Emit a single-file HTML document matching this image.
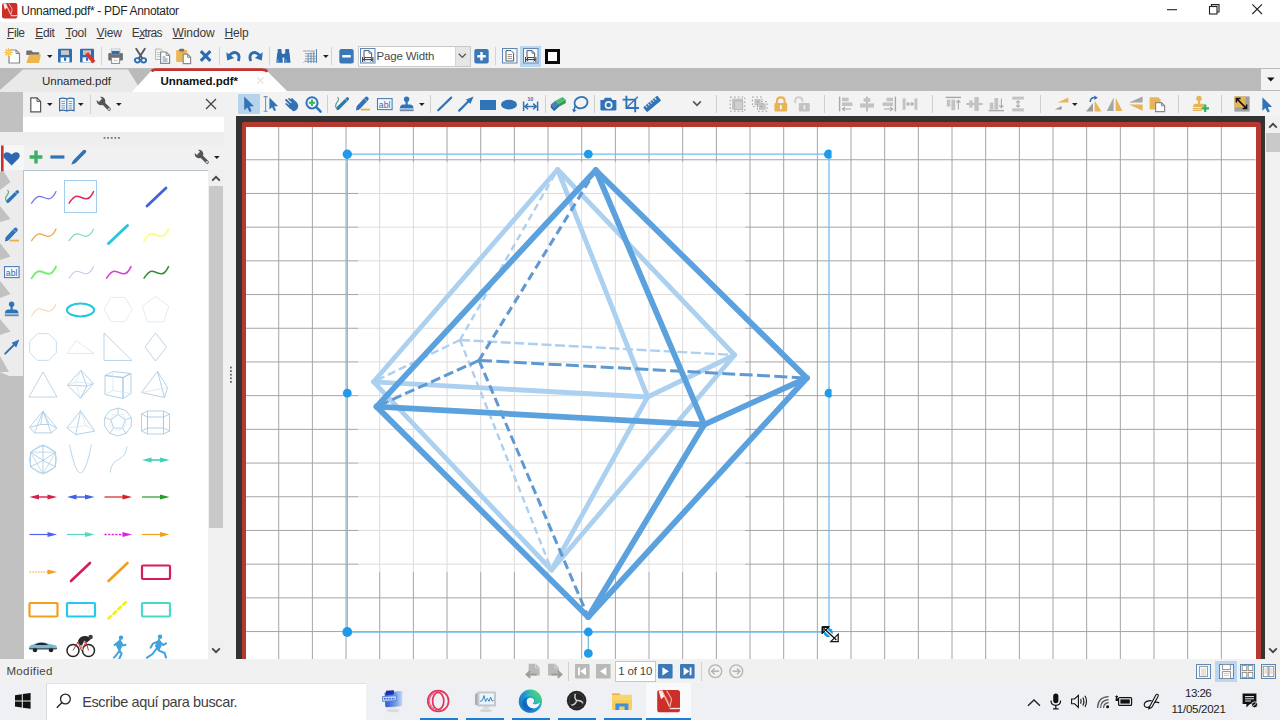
<!DOCTYPE html>
<html lang="en"><head><meta charset="utf-8"><title>Unnamed.pdf* - PDF Annotator</title>
<style>
html,body{margin:0;padding:0;}
body{width:1280px;height:720px;overflow:hidden;position:relative;background:#f3f3f3;font-family:"Liberation Sans",sans-serif;}
svg{overflow:visible;display:block;}
u{text-decoration:underline;text-underline-offset:1px;}
</style></head><body>
<div style="position:absolute;left:0px;top:0px;width:1280px;height:22px;background:#ffffff;"></div>
<svg style="position:absolute;left:2px;top:3px;" width="16" height="16" viewBox="0 0 16 16">
<rect x="0" y="0" width="15.400" height="15.400" rx="2.200" fill="#cc2e2a"/>
<polygon points="1.200,0.400 4.200,0.300 5.200,4.600 2.800,6.400" fill="#fff" opacity=".92"/>
<path d="M3.600,0.800 L8.800,11.400" stroke="#f6c4be" stroke-width="1.100" fill="none"/>
<path d="M6.800,0.400 L10.200,6.200 L9,11.600" stroke="#f2aaa3" stroke-width="1" fill="none"/>
<path d="M8.800,12.700 H15.400" stroke="#fbe3e0" stroke-width="1.100"/>
</svg>
<div style="position:absolute;left:21.3px;top:4.2px;font-size:12px;line-height:14px;color:#1f1f1f;font-weight:normal;white-space:nowrap;letter-spacing:-0.307px;">Unnamed.pdf* - PDF Annotator</div>
<svg style="position:absolute;left:1160px;top:0px;" width="120" height="22" viewBox="0 0 120 22">
<path d="M7,9.7 H17" stroke="#222" stroke-width="1.1"/>
<rect x="49.5" y="6.5" width="7.5" height="7.5" fill="none" stroke="#222" stroke-width="1.1"/>
<path d="M51.5,6.5 V4.6 H59 V12 H57" fill="none" stroke="#222" stroke-width="1.1"/>
<path d="M92.3,4.3 L102,14 M102,4.3 L92.3,14" stroke="#222" stroke-width="1.1"/>
</svg>
<div style="position:absolute;left:0px;top:22px;width:1280px;height:46px;background:#f3f3f3;"></div>
<div style="position:absolute;left:7px;top:25.6px;font-size:12px;line-height:14px;color:#3a3a3a;font-weight:normal;white-space:nowrap;letter-spacing:-0.434px;"><u>F</u>ile</div>
<div style="position:absolute;left:35.2px;top:25.6px;font-size:12px;line-height:14px;color:#3a3a3a;font-weight:normal;white-space:nowrap;letter-spacing:-0.319px;"><u>E</u>dit</div>
<div style="position:absolute;left:65.4px;top:25.6px;font-size:12px;line-height:14px;color:#3a3a3a;font-weight:normal;white-space:nowrap;letter-spacing:-0.253px;"><u>T</u>ool</div>
<div style="position:absolute;left:96.6px;top:25.6px;font-size:12px;line-height:14px;color:#3a3a3a;font-weight:normal;white-space:nowrap;letter-spacing:-0.198px;"><u>V</u>iew</div>
<div style="position:absolute;left:131.8px;top:25.6px;font-size:12px;line-height:14px;color:#3a3a3a;font-weight:normal;white-space:nowrap;letter-spacing:-0.668px;">E<u>x</u>tras</div>
<div style="position:absolute;left:172.6px;top:25.6px;font-size:12px;line-height:14px;color:#3a3a3a;font-weight:normal;white-space:nowrap;letter-spacing:-0.113px;"><u>W</u>indow</div>
<div style="position:absolute;left:224.6px;top:25.6px;font-size:12px;line-height:14px;color:#3a3a3a;font-weight:normal;white-space:nowrap;letter-spacing:-0.170px;"><u>H</u>elp</div>
<div style="position:absolute;left:0px;top:68px;width:1280px;height:23px;background:#bababa;"></div>
<div style="position:absolute;left:0px;top:91px;width:1280px;height:1px;background:#f3f3f3;"></div>
<svg style="position:absolute;left:0px;top:68px;" width="300" height="24" viewBox="0 0 300 24">
<polygon points="0,24 0,22 23,1.5 128,1.5 142,24" fill="#e9e9e9"/>
<polygon points="132,24 151,3 155,1.5 262,1.5 268,4 288,24" fill="#ffffff"/>
<path d="M151.5,3.3 Q153,1.6 156,1.6 H262 Q265.5,1.6 267.5,3.6" fill="none" stroke="#c8322d" stroke-width="2.6"/>
<path d="M257.5,9.5 L263.5,15.5 M263.5,9.5 L257.5,15.5" stroke="#e3e3e3" stroke-width="1.2"/>
</svg>
<div style="position:absolute;left:42px;top:74.5px;font-size:11.5px;line-height:13.5px;color:#2a2a2a;font-weight:normal;white-space:nowrap;letter-spacing:-0.004px;">Unnamed.pdf</div>
<div style="position:absolute;left:160.4px;top:74.5px;font-size:11.5px;line-height:13.5px;color:#111;font-weight:bold;white-space:nowrap;letter-spacing:-0.037px;">Unnamed.pdf*</div>
<div style="position:absolute;left:1261px;top:69px;width:19px;height:21px;background:#f3f3f3;"></div>
<svg style="position:absolute;left:1261px;top:69px;" width="19" height="21" viewBox="0 0 19 21"><polygon points="6,8.5 13.5,8.5 9.75,12.5" fill="#111"/></svg>
<svg style="position:absolute;left:4px;top:48px;" width="18" height="16" viewBox="0 0 18 16">
<path d="M6.5,2 H12 L15.5,5.5 V15 H5 V8" fill="#fff" stroke="#888" stroke-width="1.2"/>
<path d="M12,2 V5.5 H15.5" fill="none" stroke="#888" stroke-width="1"/>
<g stroke="#f3b63a" stroke-width="1.3"><path d="M4.5,0.2 V8.4 M0.4,4.3 H8.6 M1.6,1.4 L7.4,7.2 M7.4,1.4 L1.6,7.2"/></g>
<circle cx="4.5" cy="4.3" r="1.8" fill="#f9cf6b"/>
</svg>
<svg style="position:absolute;left:26px;top:48px;" width="16" height="16" viewBox="0 0 16 16">
<path d="M0.3,15 V3.3 Q0.3,2.5 1.2,2.5 H5.5 L7,4.3 H13.2 V7 H0.3" fill="#6d6e76"/>
<path d="M0.3,15 L3.2,6.5 H15 L13,15 Z" fill="#ebb552"/>
</svg>
<svg style="position:absolute;left:46.5px;top:54.5px;" width="6" height="3" viewBox="0 0 6 3"><polygon points="0,0 5.6,0 2.8,3" fill="#222"/></svg>
<svg style="position:absolute;left:58px;top:48px;" width="15" height="15" viewBox="0 0 15 15">
<rect x="0" y="0.8" width="14" height="13.6" rx="1" fill="#2e6eb0"/>
<rect x="3" y="2.3" width="8" height="4.6" fill="#c9c9c9"/>
<rect x="2.6" y="9.4" width="8.8" height="5" fill="#fff"/>
<rect x="6" y="9.4" width="2.2" height="3.4" fill="#2e6eb0"/>
</svg>
<svg style="position:absolute;left:80px;top:48px;" width="15" height="15" viewBox="0 0 15 15">
<rect x="0" y="0.8" width="14" height="13.6" rx="1" fill="#2e6eb0"/>
<rect x="3" y="2.3" width="8" height="4.6" fill="#c9c9c9"/>
<rect x="2.6" y="9.4" width="8.8" height="5" fill="#fff"/>
<rect x="6" y="9.4" width="2.2" height="3.4" fill="#2e6eb0"/>
</svg>
<svg style="position:absolute;left:80px;top:48px;" width="16" height="16" viewBox="0 0 16 16">
<path d="M5.2,6.4 L8,4 L15.4,13 L12.6,15.4 Z" fill="#d8362f"/>
<path d="M5.2,6.4 L8,4 L4.200,3.400 Z" fill="#e9a9a0"/>
</svg>
<div style="position:absolute;left:101px;top:47px;width:1px;height:18px;background:#d4d4d4;"></div>
<svg style="position:absolute;left:108px;top:48px;" width="16" height="16" viewBox="0 0 16 16">
<rect x="0.3" y="5" width="14.6" height="7.6" rx="1.2" fill="#6d6e76"/>
<rect x="3.2" y="1" width="8.8" height="5" fill="#fff" stroke="#9aa" stroke-width=".6"/>
<rect x="3.6" y="2.8" width="8" height="3.2" fill="#2e6eb0"/>
<rect x="3.6" y="9.4" width="8" height="6" fill="#fff" stroke="#8a8a8a" stroke-width="1"/>
<path d="M5.8,12.4 H9.6" stroke="#bbb" stroke-width="1"/>
</svg>
<svg style="position:absolute;left:134px;top:48px;" width="14" height="16" viewBox="0 0 14 16">
<path d="M2.2,0.8 L8.2,10.2 M10.8,0.8 L4.8,10.2" stroke="#555a60" stroke-width="1.9" stroke-linecap="round"/>
<ellipse cx="3.4" cy="12.3" rx="2.5" ry="2.2" fill="none" stroke="#2e6eb0" stroke-width="1.9"/>
<ellipse cx="9.6" cy="12.3" rx="2.5" ry="2.2" fill="none" stroke="#2e6eb0" stroke-width="1.9"/>
</svg>
<svg style="position:absolute;left:155px;top:48px;" width="16" height="16" viewBox="0 0 16 16">
<path d="M0.6,1 H5.5 L8,3.5 V11.5 H0.6 Z" fill="#f4f4f4" stroke="#b5b5b5" stroke-width="1"/>
<path d="M2,4.5 H6 M2,6.5 H6 M2,8.5 H5" stroke="#c5c5c5" stroke-width=".9"/>
<path d="M5.6,4 H11.2 L14.6,7.4 V15.4 H5.6 Z" fill="#fff" stroke="#8a8a8a" stroke-width="1.2"/>
<path d="M11.2,4 V7.4 H14.6" fill="none" stroke="#8a8a8a" stroke-width="1"/>
<path d="M7.6,9 H10.4 M7.6,11 H12.6 M7.6,13 H12.6" stroke="#5d88b5" stroke-width="1"/>
</svg>
<svg style="position:absolute;left:176px;top:48px;" width="16" height="16" viewBox="0 0 16 16">
<rect x="0.2" y="2" width="11" height="12" rx="1" fill="#ebb552"/>
<rect x="3.2" y="0.8" width="5" height="2.6" rx=".8" fill="#6d6e76"/>
<path d="M7.2,6.2 H11.5 L14.6,9.3 V15.6 H7.2 Z" fill="#fff" stroke="#8a8a8a" stroke-width="1.2"/>
<path d="M11.5,6.2 V9.3 H14.6" fill="none" stroke="#8a8a8a" stroke-width="1"/>
</svg>
<svg style="position:absolute;left:199px;top:49px;" width="14" height="14" viewBox="0 0 14 14"><path d="M1.8,2.2 L11.4,11.8 M11.4,2.2 L1.8,11.8" stroke="#2e6eb0" stroke-width="3.1"/></svg>
<div style="position:absolute;left:219px;top:47px;width:1px;height:18px;background:#d4d4d4;"></div>
<svg style="position:absolute;left:226px;top:49px;" width="15" height="14" viewBox="0 0 15 14">
<path d="M3.2,6.6 Q8.2,1.2 12,5 Q14,7.6 12.2,12" fill="none" stroke="#2e6eb0" stroke-width="2.9"/>
<polygon points="0.3,3.2 1.2,11.4 8.2,9" fill="#2e6eb0"/>
</svg>
<svg style="position:absolute;left:248px;top:49px;" width="15" height="14" viewBox="0 0 15 14">
<path d="M11.8,6.6 Q6.8,1.2 3,5 Q1,7.6 2.8,12" fill="none" stroke="#2e6eb0" stroke-width="2.9"/>
<polygon points="14.7,3.2 13.8,11.4 6.8,9" fill="#2e6eb0"/>
</svg>
<div style="position:absolute;left:269px;top:47px;width:1px;height:18px;background:#d4d4d4;"></div>
<svg style="position:absolute;left:276px;top:48px;" width="15" height="16" viewBox="0 0 15 16">
<rect x="1.6" y="1" width="4" height="4.6" rx="1" fill="#2e6eb0"/>
<rect x="9.2" y="1" width="4" height="4.6" rx="1" fill="#2e6eb0"/>
<path d="M1.2,5 H6.2 L6.8,14.8 H0.3 Z" fill="#2e6eb0"/>
<path d="M8.6,5 H13.6 L14.5,14.8 H8 Z" fill="#2e6eb0"/>
<rect x="5.8" y="6" width="3.2" height="3.6" fill="#2e6eb0"/>
<path d="M2,11.5 V14.5 M10,11.5 V14.5" stroke="#7fb0e0" stroke-width="1"/>
</svg>
<svg style="position:absolute;left:302px;top:48px;" width="16" height="16" viewBox="0 0 16 16">
<g stroke="#9aa0a8" stroke-width="1"><path d="M1,3 H12 M3,5.6 H13 M3,8.2 H14 M3,10.8 H14 M2,13.4 H14"/></g>
<g stroke="#5d88b5" stroke-width="1"><path d="M6.2,6 V15 M9,4.5 V15 M11.8,3 V15 M14.5,1 V15"/></g>
<path d="M1,15 L14.6,1" stroke="#b9c4d0" stroke-width=".9"/>
</svg>
<svg style="position:absolute;left:323px;top:54.5px;" width="6" height="3" viewBox="0 0 6 3"><polygon points="0,0 5.6,0 2.8,3" fill="#222"/></svg>
<div style="position:absolute;left:331px;top:47px;width:1px;height:18px;background:#d4d4d4;"></div>
<svg style="position:absolute;left:339px;top:49px;" width="15" height="15" viewBox="0 0 15 15"><rect x="0.3" y="0" width="14.4" height="14.4" rx="2" fill="#3b78b8"/><rect x="3.2" y="6.1" width="8.6" height="2.4" rx=".6" fill="#fff"/></svg>
<div style="position:absolute;left:358px;top:46px;width:111px;height:19px;background:#fff;border:1px solid #c9c9c9;"></div>
<div style="position:absolute;left:455px;top:47px;width:14px;height:19px;background:#e6e6e6;border-left:1px solid #d5d5d5;"></div>
<svg style="position:absolute;left:458px;top:53px;" width="9" height="6" viewBox="0 0 9 6"><path d="M0.8,0.8 L4.3,4.4 L7.8,0.8" fill="none" stroke="#555" stroke-width="1.3"/></svg>
<svg style="position:absolute;left:360px;top:48px;" width="16" height="16" viewBox="0 0 16 16">
<rect x="0.5" y="0.5" width="14.5" height="14.5" fill="#f4f8fc" stroke="#5d88b5" stroke-width="1"/>
<path d="M4,2.6 H9 L11.6,5.2 V9.5 H4 Z" fill="#fff" stroke="#555" stroke-width="1"/>
<path d="M9,2.6 V5.2 H11.6" fill="none" stroke="#555" stroke-width=".8"/>
<path d="M2.6,9 V14 M12.9,9 V14 M3.2,11.6 H12.4 M5.2,9.8 L3.3,11.6 L5.2,13.4 M10.4,9.8 L12.3,11.6 L10.4,13.4" fill="none" stroke="#333" stroke-width="1"/>
</svg>
<div style="position:absolute;left:376.6px;top:49.5px;font-size:11.5px;line-height:13.5px;color:#4a4a4a;font-weight:normal;white-space:nowrap;letter-spacing:-0.195px;">Page Width</div>
<svg style="position:absolute;left:474px;top:49px;" width="15" height="15" viewBox="0 0 15 15"><rect x="0.3" y="0" width="14.4" height="14.4" rx="2" fill="#3b78b8"/><rect x="3.2" y="6.1" width="8.6" height="2.4" rx=".6" fill="#fff"/><rect x="6.3" y="3" width="2.4" height="8.6" rx=".6" fill="#fff"/></svg>
<div style="position:absolute;left:495px;top:47px;width:1px;height:18px;background:#d4d4d4;"></div>
<svg style="position:absolute;left:502px;top:48px;" width="16" height="16" viewBox="0 0 16 16">
<rect x="0.5" y="0.5" width="14.5" height="14.5" fill="#f4f8fc" stroke="#5d88b5" stroke-width="1"/>
<path d="M4,2.6 H9 L11.6,5.2 V13 H4 Z" fill="#fff" stroke="#555" stroke-width="1"/>
<path d="M5.6,6.6 H10 M5.6,8.6 H10 M5.6,10.6 H10" stroke="#888" stroke-width=".9"/>
</svg>
<div style="position:absolute;left:520px;top:46px;width:21px;height:21px;background:#b9d7f0;"></div>
<svg style="position:absolute;left:523px;top:48px;" width="16" height="16" viewBox="0 0 16 16">
<rect x="0.5" y="0.5" width="14.5" height="14.5" fill="#f4f8fc" stroke="#5d88b5" stroke-width="1"/>
<path d="M4,2.6 H9 L11.6,5.2 V9.5 H4 Z" fill="#fff" stroke="#555" stroke-width="1"/>
<path d="M9,2.6 V5.2 H11.6" fill="none" stroke="#555" stroke-width=".8"/>
<path d="M2.6,9 V14 M12.9,9 V14 M3.2,11.6 H12.4 M5.2,9.8 L3.3,11.6 L5.2,13.4 M10.4,9.8 L12.3,11.6 L10.4,13.4" fill="none" stroke="#333" stroke-width="1"/>
</svg>
<div style="position:absolute;left:545px;top:49px;width:9px;height:9px;border:3px solid #0a0a0a;background:#fff;width:9px;height:9px;"></div>
<div style="position:absolute;left:230px;top:92px;width:1050px;height:24px;background:#f3f3f3;"></div>
<div style="position:absolute;left:238px;top:94px;width:22px;height:20px;background:#b7d4ed;"></div>
<svg style="position:absolute;left:236px;top:92px;" width="30" height="24" viewBox="0 0 30 24"><polygon points="8.2,4.4 8.2,18.3 11.3,15.5 13.5,19.9 15.7,18.9 13.6,14.6 18.0,14.2" fill="#3173b7"/></svg>
<svg style="position:absolute;left:258px;top:92px;" width="26" height="24" viewBox="0 0 26 24">
<path d="M5.6,4.6 H9.6 M5.6,19.2 H9.6 M7.6,4.6 V19.2" stroke="#6f93b8" stroke-width="1.1" fill="none"/>
<polygon points="11.4,5.4 11.4,17.6 14.1,15.2 16.1,19.1 18.1,18.2 16.2,14.4 20.0,14.0" fill="#3173b7"/>
</svg>
<svg style="position:absolute;left:284.6px;top:98.2px;" width="14.4" height="14.4" viewBox="0 0 16 16">
<path d="M1.2,2.2 L8,8.6 M4.6,1 L10.6,6.8 M7.8,1.2 L12.4,5.8" stroke="#3173b7" stroke-width="2.1" stroke-linecap="round"/>
<path d="M3.2,8.4 Q6,4.6 12,4.4 Q15.6,6.4 14.4,10.6 Q12.6,14.8 9.2,14.8 Q6.4,13.4 3.2,8.4 Z" fill="#3173b7"/>
<path d="M1.4,6.6 L6,11" stroke="#3173b7" stroke-width="2" stroke-linecap="round"/>
</svg>
<svg style="position:absolute;left:304px;top:95px;" width="18" height="18" viewBox="0 0 18 18">
<circle cx="8" cy="7.8" r="5.6" fill="#f4f8fc" stroke="#3173b7" stroke-width="2"/>
<path d="M12.3,12.2 L16.6,16.6" stroke="#3173b7" stroke-width="2.5" stroke-linecap="round"/>
<path d="M8,4.6 V11 M4.8,7.8 H11.2" stroke="#35b65c" stroke-width="1.9"/>
</svg>
<div style="position:absolute;left:327px;top:95px;width:1px;height:18px;background:#cfcfcf;"></div>
<svg style="position:absolute;left:334px;top:96px;" width="16" height="16" viewBox="0 0 16 16">
<path d="M3.4,1.2 Q5.6,2.6 3.6,5.4 Q1.2,8.4 1.6,10.4 Q2,12.2 3.4,12.8" fill="none" stroke="#5aa884" stroke-width="1.2"/>
<path d="M4.2,12 L13.4,2.8" stroke="#3173b7" stroke-width="3.3" stroke-linecap="round"/>
<path d="M2.4,14.2 L4.6,13.4 L3.2,12 Z" fill="#3173b7"/>
<path d="M11.2,3 L13.2,5" stroke="#a9c7e6" stroke-width=".8"/>
</svg>
<svg style="position:absolute;left:355px;top:96px;" width="16" height="16" viewBox="0 0 16 16">
<path d="M5.8,13.6 H15" stroke="#e8b04c" stroke-width="1.8"/>
<path d="M3.6,11.2 L11.6,2.8" stroke="#3173b7" stroke-width="4.2" stroke-linecap="round"/>
<path d="M0.8,14.4 L4.4,13.6 L1.8,10.8 Z" fill="#3173b7"/>
<path d="M9.2,2.6 L12.2,5.4" stroke="#a9c7e6" stroke-width=".8"/>
</svg>
<svg style="position:absolute;left:377px;top:96px;" width="16" height="16" viewBox="0 0 16 16">
<rect x="0.5" y="2.6" width="14.6" height="11" fill="#f6f9fc" stroke="#4d7fb4" stroke-width="1.1"/>
<text x="1.8" y="11.6" font-family="Liberation Sans, sans-serif" font-size="8.6" fill="#2f6cae" textLength="11.6" lengthAdjust="spacingAndGlyphs">abl</text>
</svg>
<svg style="position:absolute;left:399px;top:96px;" width="16" height="16" viewBox="0 0 16 16">
<circle cx="7.6" cy="3.2" r="2.7" fill="#3173b7"/>
<rect x="6.5" y="4.8" width="2.2" height="4.6" fill="#3173b7"/>
<path d="M1,12.2 Q1,8.6 4.4,8.6 H10.8 Q14.4,8.6 14.4,12.2 Z" fill="#3173b7"/>
<rect x="0.6" y="12.4" width="14.2" height="1.3" fill="#8ab4de"/>
<rect x="0.8" y="13.7" width="13.8" height="1.5" fill="#6d86a3"/>
</svg>
<svg style="position:absolute;left:419px;top:102.5px;" width="6" height="3" viewBox="0 0 6 3"><polygon points="0,0 5.6,0 2.8,3" fill="#222"/></svg>
<div style="position:absolute;left:430px;top:95px;width:1px;height:18px;background:#cfcfcf;"></div>
<svg style="position:absolute;left:437px;top:96px;" width="16" height="16" viewBox="0 0 16 16"><path d="M1.2,14.2 L14.2,1.6" stroke="#3173b7" stroke-width="2.2" stroke-linecap="round"/></svg>
<svg style="position:absolute;left:458px;top:96px;" width="16" height="16" viewBox="0 0 16 16"><path d="M1.2,14.6 L11,4.8" stroke="#3173b7" stroke-width="2.2" stroke-linecap="round"/><polygon points="15.6,0.4 8,3.6 12.4,8" fill="#3173b7"/></svg>
<div style="position:absolute;left:480px;top:100px;width:16px;height:9.5px;background:#3173b7;"></div>
<svg style="position:absolute;left:501px;top:96px;" width="16" height="16" viewBox="0 0 16 16"><ellipse cx="8" cy="8.6" rx="8" ry="4.9" fill="#3173b7"/></svg>
<svg style="position:absolute;left:522px;top:95px;" width="18" height="18" viewBox="0 0 18 18">
<text x="5.2" y="5.6" font-family="Liberation Sans, sans-serif" font-size="5.6" font-weight="bold" fill="#3173b7">10</text>
<path d="M1.6,6.6 V16 M15.6,6.6 V16 M3,11.4 H14.2 M6,8.6 L3,11.4 L6,14.2 M11.2,8.6 L14.2,11.4 L11.2,14.2" stroke="#3173b7" stroke-width="1.5" fill="none"/>
</svg>
<div style="position:absolute;left:545px;top:95px;width:1px;height:18px;background:#cfcfcf;"></div>
<svg style="position:absolute;left:550px;top:96px;" width="18" height="16" viewBox="0 0 18 16">
<polygon points="0.8,8.4 5.4,4.8 8.6,7.8 4,11.8" fill="#4a7fb8"/>
<polygon points="0.8,8.4 4,11.8 4,15 0.8,11.6" fill="#2b5f98"/>
<polygon points="5.4,4.8 12.6,1 15.8,3.8 8.6,7.8" fill="#46c06a"/>
<polygon points="4,11.8 8.6,7.8 15.8,3.8 15.8,7 8.6,11 4,15" fill="#2f9a50"/>
<polygon points="4,11.8 8.6,7.8 8.6,11 4,15" fill="#2e6eb0"/>
</svg>
<svg style="position:absolute;left:571px;top:95px;" width="18" height="18" viewBox="0 0 18 18">
<ellipse cx="10" cy="7.6" rx="6.6" ry="5.6" fill="none" stroke="#3173b7" stroke-width="1.8" transform="rotate(-18 10 7.6)"/>
<path d="M4.4,11.4 Q2.6,13.4 3.2,16.2" fill="none" stroke="#3173b7" stroke-width="1.6"/>
<polygon points="1.2,14 5.6,15 2.6,17.6" fill="#3173b7"/>
</svg>
<div style="position:absolute;left:594px;top:95px;width:1px;height:18px;background:#cfcfcf;"></div>
<svg style="position:absolute;left:600px;top:96px;" width="17" height="16" viewBox="0 0 17 16">
<path d="M0.4,4 H3.6 L5,1.8 H11 L12.4,4 H15.6 Q16.4,4 16.4,4.8 V13.6 Q16.4,14.4 15.6,14.4 H1.2 Q0.4,14.4 0.4,13.6 Z" fill="#3173b7"/>
<circle cx="8.6" cy="9" r="3.9" fill="#f3f3f3"/>
<circle cx="8.6" cy="9" r="2.3" fill="#3173b7"/>
</svg>
<svg style="position:absolute;left:622px;top:95px;" width="18" height="18" viewBox="0 0 18 18">
<path d="M4.4,0.8 V13 H17 M0.6,4.6 H13.2 V17.2" fill="none" stroke="#3173b7" stroke-width="1.9"/>
<path d="M5.4,12 L15.8,1.8" stroke="#3173b7" stroke-width="1.3"/>
</svg>
<svg style="position:absolute;left:643px;top:95px;" width="18" height="18" viewBox="0 0 18 18">
<g transform="rotate(-40 9 9)"><rect x="0" y="5.8" width="18.4" height="6.4" rx="1" fill="#3173b7"/>
<path d="M3,5.8 V8.6 M6,5.8 V8.6 M9,5.8 V8.6 M12,5.8 V8.6 M15,5.8 V8.6" stroke="#dce9f6" stroke-width="1"/></g>
</svg>
<svg style="position:absolute;left:692px;top:100px;" width="10" height="8" viewBox="0 0 10 8"><path d="M1.2,1.4 L5,5.4 L8.8,1.4" fill="none" stroke="#555" stroke-width="1.6"/></svg>
<div style="position:absolute;left:716px;top:95px;width:1px;height:18px;background:#cfcfcf;"></div>
<svg style="position:absolute;left:729px;top:96px;" width="17" height="16" viewBox="0 0 17 16">
<rect x="3" y="2.6" width="11" height="11" fill="#c3c3c3"/>
<rect x="1.2" y="1" width="14.6" height="14.2" fill="none" stroke="#9a9a9a" stroke-width="1" stroke-dasharray="1.6 2.2"/>
<rect x="5.4" y="5" width="8.4" height="8.4" fill="#cfcfcf" stroke="#b5b5b5" stroke-width=".8"/>
</svg>
<svg style="position:absolute;left:751px;top:96px;" width="17" height="16" viewBox="0 0 17 16">
<rect x="3.4" y="3" width="6.2" height="6.2" fill="#c3c3c3"/>
<rect x="8" y="7.2" width="6.6" height="6.6" fill="#c3c3c3"/>
<rect x="1.4" y="1" width="9.6" height="9.6" fill="none" stroke="#9a9a9a" stroke-width="1" stroke-dasharray="1.6 2.2"/>
<rect x="6.4" y="5.6" width="9.6" height="9.6" fill="none" stroke="#9a9a9a" stroke-width="1" stroke-dasharray="1.6 2.2"/>
</svg>
<svg style="position:absolute;left:773px;top:96px;" width="16" height="16" viewBox="0 0 16 16">
<path d="M4,7.6 V5.2 Q4,1.4 7.8,1.4 Q11.6,1.4 11.6,5.2 V7.6" fill="none" stroke="#e9b254" stroke-width="2.2"/>
<rect x="1.4" y="7" width="12.8" height="8.6" rx="1" fill="#e9b254"/>
<rect x="7" y="9.2" width="1.7" height="4" fill="#fff"/>
</svg>
<svg style="position:absolute;left:793px;top:96px;" width="18" height="16" viewBox="0 0 18 16">
<path d="M2.2,7.2 V4.8 Q2.2,1.2 5.8,1.2 Q9.4,1.2 9.4,4.8 V6" fill="none" stroke="#cfcfcf" stroke-width="2"/>
<rect x="5.8" y="7" width="11" height="8.6" rx="1" fill="#c3c3c3"/>
<rect x="10.6" y="9.2" width="1.6" height="4" fill="#f3f3f3"/>
</svg>
<div style="position:absolute;left:824px;top:95px;width:1px;height:18px;background:#cfcfcf;"></div>
<svg style="position:absolute;left:838px;top:96px;" width="16" height="16" viewBox="0 0 16 16">
<path d="M1.6,0.6 V15.4" stroke="#a8a8a8" stroke-width="1.4"/>
<rect x="4" y="1.6" width="6.6" height="3.6" fill="#c3c3c3"/>
<rect x="4" y="6.4" width="10.4" height="3.6" fill="#c3c3c3"/>
<path d="M13,13 H4.4 M7,10.8 L4.4,13 L7,15.2" fill="none" stroke="#a8a8a8" stroke-width="1.1"/>
</svg>
<svg style="position:absolute;left:859px;top:96px;" width="16" height="16" viewBox="0 0 16 16">
<path d="M8,0.6 V15.4" stroke="#a8a8a8" stroke-width="1.4"/>
<rect x="4.6" y="2.2" width="6.8" height="3.6" fill="#c3c3c3"/>
<rect x="1" y="7.4" width="14" height="4.2" fill="#c3c3c3"/>
</svg>
<svg style="position:absolute;left:881px;top:96px;" width="16" height="16" viewBox="0 0 16 16">
<path d="M14.4,0.6 V15.4" stroke="#a8a8a8" stroke-width="1.4"/>
<rect x="5.4" y="1.6" width="6.6" height="3.6" fill="#c3c3c3"/>
<rect x="1.6" y="6.4" width="10.4" height="3.6" fill="#c3c3c3"/>
<path d="M3,13 H11.6 M9,10.8 L11.6,13 L9,15.2" fill="none" stroke="#a8a8a8" stroke-width="1.1"/>
</svg>
<svg style="position:absolute;left:902px;top:96px;" width="16" height="16" viewBox="0 0 16 16">
<rect x="0.6" y="2.4" width="3" height="11.4" fill="#c3c3c3"/>
<rect x="12.4" y="2.4" width="3" height="11.4" fill="#c3c3c3"/>
<path d="M4.8,8 H11.2 M6.6,6 L4.8,8 L6.6,10 M9.4,6 L11.2,8 L9.4,10" fill="none" stroke="#9a9a9a" stroke-width="1"/>
</svg>
<div style="position:absolute;left:932px;top:95px;width:1px;height:18px;background:#cfcfcf;"></div>
<svg style="position:absolute;left:945px;top:96px;" width="17" height="16" viewBox="0 0 17 16">
<path d="M0.6,1.4 H16" stroke="#a8a8a8" stroke-width="1.4"/>
<rect x="1.8" y="3.6" width="3.6" height="7" fill="#c3c3c3"/>
<rect x="6.4" y="3.6" width="3.8" height="10.6" fill="#c3c3c3"/>
<path d="M13.4,13.6 V4.4 M11.4,6.6 L13.4,4.4 L15.4,6.6" fill="none" stroke="#a8a8a8" stroke-width="1.1"/>
</svg>
<svg style="position:absolute;left:966px;top:96px;" width="17" height="16" viewBox="0 0 17 16">
<path d="M0.4,8 H16.6" stroke="#a8a8a8" stroke-width="1.4"/>
<rect x="3.2" y="4.4" width="3.4" height="7.2" fill="#c3c3c3"/>
<rect x="8.4" y="1" width="4.4" height="14" fill="#c3c3c3"/>
</svg>
<svg style="position:absolute;left:988px;top:96px;" width="17" height="16" viewBox="0 0 17 16">
<path d="M0.6,14.6 H16" stroke="#a8a8a8" stroke-width="1.4"/>
<rect x="1.8" y="6.6" width="3.6" height="7" fill="#c3c3c3"/>
<rect x="6.4" y="2" width="3.8" height="11.6" fill="#c3c3c3"/>
<path d="M13.4,2.4 V11.6 M11.4,9.4 L13.4,11.6 L15.4,9.4" fill="none" stroke="#a8a8a8" stroke-width="1.1"/>
</svg>
<svg style="position:absolute;left:1010px;top:96px;" width="16" height="16" viewBox="0 0 16 16">
<rect x="2.2" y="0.6" width="11.6" height="3" fill="#c3c3c3"/>
<rect x="2.2" y="12.4" width="11.6" height="3" fill="#c3c3c3"/>
<path d="M8,4.8 V11.2 M6,6.6 L8,4.8 L10,6.6 M6,9.4 L8,11.2 L10,9.4" fill="none" stroke="#9a9a9a" stroke-width="1"/>
</svg>
<div style="position:absolute;left:1040px;top:95px;width:1px;height:18px;background:#cfcfcf;"></div>
<svg style="position:absolute;left:1054px;top:96px;" width="16" height="16" viewBox="0 0 16 16">
<polygon points="3.6,6.4 14.4,1.4 14.4,6.4" fill="#e6b558"/>
<polygon points="0.8,13.6 7.6,10 7.6,13.6" fill="#9a9a9a"/>
</svg>
<svg style="position:absolute;left:1072px;top:102.5px;" width="6" height="3" viewBox="0 0 6 3"><polygon points="0,0 5.6,0 2.8,3" fill="#222"/></svg>
<svg style="position:absolute;left:1085px;top:95px;" width="18" height="18" viewBox="0 0 18 18">
<polygon points="1,16.4 8,8 8,16.4" fill="#9a9a9a"/>
<polygon points="9.6,16.4 9.6,5.6 16.6,16.4" fill="#e6b558"/>
<path d="M5.2,7 Q5.4,2.4 10,2.6" fill="none" stroke="#2e6eb0" stroke-width="1.5"/>
<polygon points="9.4,0.4 12.8,2.8 9.4,5" fill="#2e6eb0"/>
</svg>
<svg style="position:absolute;left:1106px;top:96px;" width="18" height="16" viewBox="0 0 18 16">
<polygon points="0.8,15 7.6,1.4 7.6,15" fill="#a6a6a6"/>
<polygon points="9.6,15 9.6,1.4 16.4,15" fill="#e6b558"/>
</svg>
<svg style="position:absolute;left:1128px;top:96px;" width="16" height="16" viewBox="0 0 16 16">
<polygon points="1,6.6 14.6,0.6 14.6,6.6" fill="#a6a6a6"/>
<polygon points="1,8.6 14.6,8.6 14.6,14.8" fill="#e6b558"/>
</svg>
<svg style="position:absolute;left:1149px;top:96px;" width="17" height="16" viewBox="0 0 17 16">
<path d="M0.6,1.2 H9.2 L11.6,3.6 V13.6 H0.6 Z" fill="#e6b558"/>
<path d="M6.6,6.6 H12.4 L15.6,9.8 V15.6 H6.6 Z" fill="#fff" stroke="#8a8a8a" stroke-width="1.2"/>
<path d="M12.4,6.6 V9.8 H15.6" fill="none" stroke="#8a8a8a" stroke-width="1"/>
</svg>
<div style="position:absolute;left:1178px;top:95px;width:1px;height:18px;background:#cfcfcf;"></div>
<svg style="position:absolute;left:1192px;top:95px;" width="18" height="18" viewBox="0 0 18 18">
<circle cx="7" cy="3.4" r="2.7" fill="#e6b558"/>
<rect x="6" y="5" width="2" height="4" fill="#e6b558"/>
<path d="M1,12 Q1,8.8 4,8.8 H10 Q13,8.8 13,12 Z" fill="#e6b558"/>
<rect x="0.8" y="12.8" width="9" height="1.2" fill="#e6b558"/>
<rect x="0.8" y="14.6" width="9" height="1.4" fill="#e6b558"/>
<path d="M13.2,9.6 V17 M9.6,13.4 H17" stroke="#2fb45a" stroke-width="2.2"/>
</svg>
<div style="position:absolute;left:1221px;top:95px;width:1px;height:18px;background:#cfcfcf;"></div>
<svg style="position:absolute;left:1234px;top:96px;" width="16" height="16" viewBox="0 0 16 16">
<rect x="0.4" y="0.4" width="15.2" height="15.2" fill="#a0a0a0"/>
<rect x="0.4" y="0.4" width="11" height="11" fill="#e6b558"/>
<path d="M2.4,2.4 L12.6,12.6 M2.4,6.6 V2.4 H6.6 M12.6,8.6 V12.6 H8.6" fill="none" stroke="#111" stroke-width="1.5"/>
</svg>
<svg style="position:absolute;left:1258px;top:92px;" width="22" height="24" viewBox="0 0 22 24"><polygon points="4.4,5.2 4.4,18.8 7.4,16.1 9.6,20.4 11.8,19.4 9.7,15.2 14.0,14.8" fill="#3173b7"/></svg>
<div style="position:absolute;left:0px;top:92px;width:23px;height:567px;background:#c1c1c1;"></div>
<div style="position:absolute;left:23px;top:92px;width:201px;height:25px;background:#f1f1f1;"></div>
<div style="position:absolute;left:23px;top:117px;width:201px;height:15px;background:#ffffff;"></div>
<div style="position:absolute;left:0px;top:132px;width:230px;height:13px;background:#eeeeee;"></div>
<div style="position:absolute;left:224px;top:92px;width:12px;height:567px;background:#f1f1f1;"></div>
<svg style="position:absolute;left:103px;top:136px;" width="20" height="4" viewBox="0 0 20 4"><rect x="0.6" y="1" width="1.8" height="1.8" fill="#777"/><rect x="4.2" y="1" width="1.8" height="1.8" fill="#777"/><rect x="7.8" y="1" width="1.8" height="1.8" fill="#777"/><rect x="11.4" y="1" width="1.8" height="1.8" fill="#777"/><rect x="15.0" y="1" width="1.8" height="1.8" fill="#777"/></svg>
<svg style="position:absolute;left:229px;top:366px;" width="4" height="20" viewBox="0 0 4 20"><rect x="1" y="0.6" width="1.8" height="1.8" fill="#666"/><rect x="1" y="4.2" width="1.8" height="1.8" fill="#666"/><rect x="1" y="7.8" width="1.8" height="1.8" fill="#666"/><rect x="1" y="11.4" width="1.8" height="1.8" fill="#666"/><rect x="1" y="15.0" width="1.8" height="1.8" fill="#666"/></svg>
<svg style="position:absolute;left:30px;top:97px;" width="12" height="16" viewBox="0 0 12 16"><path d="M0.8,0.8 H7 L10.6,4.4 V14.8 H0.8 Z" fill="#fff" stroke="#555" stroke-width="1.2"/><path d="M7,0.8 V4.4 H10.6" fill="none" stroke="#555" stroke-width="1"/></svg>
<svg style="position:absolute;left:46.5px;top:102.5px;" width="6" height="3" viewBox="0 0 6 3"><polygon points="0,0 5.6,0 2.8,3" fill="#222"/></svg>
<svg style="position:absolute;left:59px;top:97px;" width="16" height="15" viewBox="0 0 16 15">
<path d="M0.6,1.6 Q4.4,0.4 7.8,2 Q11.2,0.4 15,1.6 V13.6 Q11.2,12.4 7.8,14 Q4.4,12.4 0.6,13.6 Z" fill="#f6f9fc" stroke="#2f67a6" stroke-width="1.2"/>
<path d="M7.8,2 V14" stroke="#2f67a6" stroke-width="1"/>
<path d="M2.4,4.4 H6 M2.4,6.6 H6 M2.4,8.8 H6 M2.4,11 H6 M9.6,4.4 H13.2 M9.6,6.6 H13.2 M9.6,8.8 H13.2 M9.6,11 H13.2" stroke="#7c8894" stroke-width=".9"/>
</svg>
<svg style="position:absolute;left:78px;top:102.5px;" width="6" height="3" viewBox="0 0 6 3"><polygon points="0,0 5.6,0 2.8,3" fill="#222"/></svg>
<div style="position:absolute;left:90px;top:95px;width:1px;height:19px;background:#cfcfcf;"></div>
<svg style="position:absolute;left:96px;top:96px;" width="16" height="16" viewBox="0 0 16 16">
<path d="M6.4,6.4 L13.2,13.2" stroke="#555" stroke-width="3.2" stroke-linecap="round"/>
<circle cx="5" cy="5" r="4.3" fill="#555"/>
<path d="M-0.6,2.6 L2.6,-0.6 L6,2.800 L2.8,6 Z" fill="#f1f1f1"/>
<circle cx="13" cy="13" r="0.9" fill="#f1f1f1"/>
</svg>
<svg style="position:absolute;left:115.5px;top:102.5px;" width="6" height="3" viewBox="0 0 6 3"><polygon points="0,0 5.6,0 2.8,3" fill="#222"/></svg>
<svg style="position:absolute;left:205px;top:98px;" width="12" height="12" viewBox="0 0 12 12"><path d="M1,1 L11,11 M11,1 L1,11" stroke="#444" stroke-width="1.3"/></svg>
<svg style="position:absolute;left:0px;top:144px;" width="24" height="240" viewBox="0 0 24 240">
<polygon points="0,0 24,0 24,240 0,240" fill="#ececec"/>
<polygon points="0,228 0,240 24,240 24,232 9,232" fill="#c1c1c1"/>
<polygon points="0,1 24,1 24,26 4,26 0,26" fill="#f6f6f6"/>
<rect x="1" y="1.5" width="2.6" height="26" fill="#cf2f2a"/>
<polygon points="0,28 4,28 10.5,38 0,46" fill="#c1c1c1"/>
<polygon points="0,62 10.5,75 0,78" fill="#c1c1c1"/>
<polygon points="0,99 10.5,112.5 0,116" fill="#c1c1c1"/>
<polygon points="0,137 10.5,150 0,154" fill="#c1c1c1"/>
<polygon points="0,175 10.5,187.5 0,191" fill="#c1c1c1"/>
<polygon points="0,212 9,228 0,228" fill="#c1c1c1"/>
</svg>
<svg style="position:absolute;left:3px;top:151px;" width="18" height="16" viewBox="0 0 18 16"><path d="M8.6,14.6 L1.6,7.6 Q-0.6,4.6 1.4,2.2 Q4.6,-0.4 8.6,3.6 Q12.6,-0.4 15.8,2.2 Q17.8,4.6 15.6,7.6 Z" fill="#2f67b3"/></svg>
<svg style="position:absolute;left:4px;top:189px;" width="16" height="16" viewBox="0 0 16 16">
<path d="M3.4,1.2 Q5.6,2.6 3.6,5.4 Q1.2,8.4 1.6,10.4 Q2,12.2 3.4,12.8" fill="none" stroke="#5aa884" stroke-width="1.2"/>
<path d="M4.2,12 L13.4,2.8" stroke="#3173b7" stroke-width="3.3" stroke-linecap="round"/>
<path d="M2.4,14.2 L4.6,13.4 L3.2,12 Z" fill="#3173b7"/>
<path d="M11.2,3 L13.2,5" stroke="#a9c7e6" stroke-width=".8"/>
</svg>
<svg style="position:absolute;left:4px;top:227px;" width="16" height="16" viewBox="0 0 16 16">
<path d="M5.8,13.6 H15" stroke="#e8b04c" stroke-width="1.8"/>
<path d="M3.6,11.2 L11.6,2.8" stroke="#3173b7" stroke-width="4.2" stroke-linecap="round"/>
<path d="M0.8,14.4 L4.4,13.6 L1.8,10.8 Z" fill="#3173b7"/>
<path d="M9.2,2.6 L12.2,5.4" stroke="#a9c7e6" stroke-width=".8"/>
</svg>
<svg style="position:absolute;left:4px;top:264px;" width="16" height="16" viewBox="0 0 16 16">
<rect x="0.5" y="2.6" width="14.6" height="11" fill="#f6f9fc" stroke="#4d7fb4" stroke-width="1.1"/>
<text x="1.8" y="11.6" font-family="Liberation Sans, sans-serif" font-size="8.6" fill="#2f6cae" textLength="11.6" lengthAdjust="spacingAndGlyphs">abl</text>
</svg>
<svg style="position:absolute;left:4px;top:301px;" width="16" height="16" viewBox="0 0 16 16">
<circle cx="7.6" cy="3.2" r="2.7" fill="#3173b7"/>
<rect x="6.5" y="4.8" width="2.2" height="4.6" fill="#3173b7"/>
<path d="M1,12.2 Q1,8.6 4.4,8.6 H10.8 Q14.4,8.6 14.4,12.2 Z" fill="#3173b7"/>
<rect x="0.6" y="12.4" width="14.2" height="1.3" fill="#8ab4de"/>
<rect x="0.8" y="13.7" width="13.8" height="1.5" fill="#6d86a3"/>
</svg>
<svg style="position:absolute;left:4px;top:339px;" width="16" height="16" viewBox="0 0 16 16"><path d="M1.2,14.6 L10.6,5.2" stroke="#3173b7" stroke-width="2" stroke-linecap="round"/><polygon points="15.4,0.6 7.6,3.8 12.2,8.4" fill="#3173b7"/></svg>
<div style="position:absolute;left:24px;top:145px;width:200px;height:25px;background:#f1f1f1;"></div>
<svg style="position:absolute;left:29px;top:150px;" width="14" height="14" viewBox="0 0 14 14"><path d="M7,0.6 V13.4 M0.6,7 H13.4" stroke="#3fae68" stroke-width="3.4"/></svg>
<svg style="position:absolute;left:50px;top:150px;" width="15" height="14" viewBox="0 0 15 14"><path d="M0.4,7 H14.4" stroke="#3173b7" stroke-width="3.2"/></svg>
<svg style="position:absolute;left:71px;top:149px;" width="17" height="16" viewBox="0 0 17 16">
<path d="M3.6,12.4 L13.4,2.6" stroke="#3173b7" stroke-width="3.6" stroke-linecap="round"/>
<path d="M0.4,15.6 L3.8,14.6 L1.4,12.2 Z" fill="#3173b7"/>
</svg>
<svg style="position:absolute;left:194px;top:149px;" width="16" height="16" viewBox="0 0 16 16">
<path d="M6.4,6.4 L13.2,13.2" stroke="#555" stroke-width="3.2" stroke-linecap="round"/>
<circle cx="5" cy="5" r="4.3" fill="#555"/>
<path d="M-0.6,2.6 L2.6,-0.6 L6,2.800 L2.8,6 Z" fill="#f1f1f1"/>
<circle cx="13" cy="13" r="0.9" fill="#f1f1f1"/>
</svg>
<svg style="position:absolute;left:213.5px;top:155.5px;" width="6" height="3" viewBox="0 0 6 3"><polygon points="0,0 5.6,0 2.8,3" fill="#222"/></svg>
<div style="position:absolute;left:23px;top:170px;width:185px;height:489px;background:#fff;border-left:1px solid #b9c3cc;border-top:1px solid #b9c3cc;box-sizing:border-box;"></div>
<div style="position:absolute;left:208px;top:170px;width:16px;height:489px;background:#f0f0f0;"></div>
<div style="position:absolute;left:209px;top:186px;width:14px;height:342px;background:#c9c9c9;"></div>
<svg style="position:absolute;left:211px;top:175px;" width="10" height="7" viewBox="0 0 10 7"><path d="M1.2,5.6 L5,1.8 L8.8,5.6" fill="none" stroke="#444" stroke-width="1.8"/></svg>
<svg style="position:absolute;left:211px;top:647px;" width="10" height="7" viewBox="0 0 10 7"><path d="M1.2,1.4 L5,5.2 L8.8,1.4" fill="none" stroke="#444" stroke-width="1.8"/></svg>
<div style="position:absolute;left:64px;top:180px;width:33px;height:33px;border:1px solid #a3cdee;box-sizing:border-box;background:#fbfdff;"></div>
<svg style="position:absolute;left:0;top:0;" width="236" height="659" viewBox="0 0 236 659"><defs><clipPath id="lc"><rect x="24" y="171" width="184" height="488"/></clipPath></defs><g clip-path="url(#lc)"><path d="M31.6,203.2 C34.4,199.0 36.4,196.3 39.1,196.3 C42.4,196.3 45.4,198.8 48.8,198.8 C51.8,198.8 54.2,195.6 56.0,191.6" fill="none" stroke="#6b6fe6" stroke-width="1.2" stroke-linecap="round" opacity="1"/><path d="M69.1,203.2 C71.9,199.0 73.9,196.3 76.6,196.3 C79.9,196.3 82.9,198.8 86.3,198.8 C89.3,198.8 91.7,195.6 93.5,191.6" fill="none" stroke="#dc2a55" stroke-width="1.5" stroke-linecap="round" opacity="1"/><path d="M147.0,206 L166.0,188" stroke="#3f63d8" stroke-width="2.8" stroke-linecap="round"/><path d="M31.6,240.7 C34.4,236.5 36.4,233.8 39.1,233.8 C42.4,233.8 45.4,236.3 48.8,236.3 C51.8,236.3 54.2,233.1 56.0,229.1" fill="none" stroke="#f0a54a" stroke-width="1.3" stroke-linecap="round" opacity="1"/><path d="M69.1,240.7 C71.9,236.5 73.9,233.8 76.6,233.8 C79.9,233.8 82.9,236.3 86.3,236.3 C89.3,236.3 91.7,233.1 93.5,229.1" fill="none" stroke="#7fd9c0" stroke-width="1.2" stroke-linecap="round" opacity="1"/><path d="M108.5,243.5 L127.5,225.5" stroke="#27c6de" stroke-width="3.0" stroke-linecap="round"/><path d="M144.1,240.7 C146.9,236.5 148.9,233.8 151.6,233.8 C154.9,233.8 157.9,236.3 161.3,236.3 C164.3,236.3 166.7,233.1 168.5,229.1" fill="none" stroke="#fcfc90" stroke-width="2.1" stroke-linecap="round" opacity="1"/><path d="M31.6,278.2 C34.4,274.0 36.4,271.3 39.1,271.3 C42.4,271.3 45.4,273.8 48.8,273.8 C51.8,273.8 54.2,270.6 56.0,266.6" fill="none" stroke="#72f074" stroke-width="2.0" stroke-linecap="round" opacity="1"/><path d="M69.1,278.2 C71.9,274.0 73.9,271.3 76.6,271.3 C79.9,271.3 82.9,273.8 86.3,273.8 C89.3,273.8 91.7,270.6 93.5,266.6" fill="none" stroke="#c3caf1" stroke-width="1.1" stroke-linecap="round" opacity="1"/><path d="M106.6,278.2 C109.4,274.0 111.4,271.3 114.1,271.3 C117.4,271.3 120.4,273.8 123.8,273.8 C126.8,273.8 129.2,270.6 131.0,266.6" fill="none" stroke="#d540d5" stroke-width="1.6" stroke-linecap="round" opacity="1"/><path d="M144.1,278.2 C146.9,274.0 148.9,271.3 151.6,271.3 C154.9,271.3 157.9,273.8 161.3,273.8 C164.3,273.8 166.7,270.6 168.5,266.6" fill="none" stroke="#2f8f33" stroke-width="1.5" stroke-linecap="round" opacity="1"/><path d="M31.6,315.7 C34.4,311.5 36.4,308.8 39.1,308.8 C42.4,308.8 45.4,311.3 48.8,311.3 C51.8,311.3 54.2,308.1 56.0,304.1" fill="none" stroke="#f7d3b0" stroke-width="1.1" stroke-linecap="round" opacity="1"/><ellipse cx="80.5" cy="310.0" rx="13.6" ry="6.4" fill="none" stroke="#27c6de" stroke-width="2.0"/><path d="M132.0,309.5 L125.0,321.6 L111.0,321.6 L104.0,309.5 L111.0,297.4 L125.0,297.4 Z" fill="none" stroke="#d5e8f1" stroke-width="0.8" stroke-linejoin="round" opacity="1"/><path d="M155.5,296.5 L168.8,306.2 L163.7,321.8 L147.3,321.8 L142.2,306.2 Z" fill="none" stroke="#d5e8f1" stroke-width="0.8" stroke-linejoin="round" opacity="1"/><path d="M56.4,352.5 L48.5,360.4 L37.5,360.4 L29.6,352.5 L29.6,341.5 L37.5,333.6 L48.5,333.6 L56.4,341.5 Z" fill="none" stroke="#b9d5ec" stroke-width="0.8" stroke-linejoin="round" opacity="1"/><path d="M67.0,353.5 L76.0,340.5 L94.0,353.5 Z" fill="none" stroke="#d3e6f3" stroke-width="0.8" stroke-linejoin="round" opacity="1"/><path d="M104.0,333.0 L104.0,360.5 L132.0,360.5 Z" fill="none" stroke="#abcce4" stroke-width="0.8" stroke-linejoin="round" opacity="1"/><path d="M155.5,333.0 L166.5,347.0 L155.5,361.0 L145.0,347.0 Z" fill="none" stroke="#abcce4" stroke-width="0.8" stroke-linejoin="round" opacity="1"/><path d="M43.0,372.0 L29.0,397.0 L57.0,397.0 Z" fill="none" stroke="#abcce4" stroke-width="0.8" stroke-linejoin="round" opacity="1"/><path d="M80.9,370.3 L93.5,383.5 L80.5,398.3 L67.5,385.1 Z" fill="none" stroke="#a2c5df" stroke-width="0.8" stroke-linejoin="round" opacity="1"/><path d="M67.5,385.1 L86.9,386.1 L93.5,383.5" fill="none" stroke="#a2c5df" stroke-width="0.8" stroke-linejoin="round" opacity="1"/><path d="M80.9,370.3 L86.9,386.1 L80.5,398.3" fill="none" stroke="#a2c5df" stroke-width="0.8" stroke-linejoin="round" opacity="1"/><path d="M67.5,385.1 L75.5,382.1 L93.5,383.5" fill="none" stroke="#d6e6f1" stroke-width="0.8" stroke-linejoin="round" opacity="1"/><path d="M80.9,370.3 L75.5,382.1 L80.5,398.3" fill="none" stroke="#d6e6f1" stroke-width="0.8" stroke-linejoin="round" opacity="1"/><path d="M105.0,375.5 L113.0,371.5 L131.0,373.5 L123.0,377.5 Z" fill="none" stroke="#a2c5df" stroke-width="0.8" stroke-linejoin="round" opacity="1"/><path d="M105.0,375.5 L123.0,377.5 L123.0,398.5 L105.0,394.5 Z" fill="none" stroke="#a2c5df" stroke-width="0.8" stroke-linejoin="round" opacity="1"/><path d="M123.0,377.5 L131.0,373.5 L131.0,393.5 L123.0,398.5 Z" fill="none" stroke="#a2c5df" stroke-width="0.8" stroke-linejoin="round" opacity="1"/><path d="M113.0,371.5 L113.0,390.5 L105.0,394.5" fill="none" stroke="#d3e6f3" stroke-width="0.8" stroke-linejoin="round" opacity="1"/><path d="M113.0,390.5 L131.0,393.5" fill="none" stroke="#d3e6f3" stroke-width="0.8" stroke-linejoin="round" opacity="1"/><path d="M157.5,371.5 L141.5,392.5 L164.5,397.5 Z" fill="none" stroke="#a2c5df" stroke-width="0.8" stroke-linejoin="round" opacity="1"/><path d="M157.5,371.5 L167.5,387.5 L164.5,397.5" fill="none" stroke="#a2c5df" stroke-width="0.8" stroke-linejoin="round" opacity="1"/><path d="M141.5,392.5 L167.5,387.5" fill="none" stroke="#d3e6f3" stroke-width="0.8" stroke-linejoin="round" opacity="1"/><path d="M29.5,427.3 L34.5,432.9 L51.2,432.9 L56.8,427.9 L49.5,424.5 L40.7,424.5 Z" fill="none" stroke="#a2c5df" stroke-width="0.8" stroke-linejoin="round" opacity="1"/><path d="M42.9,411.2 L29.5,427.3" fill="none" stroke="#abcce4" stroke-width="0.8" stroke-linejoin="round" opacity="1"/><path d="M42.9,411.2 L34.5,432.9" fill="none" stroke="#abcce4" stroke-width="0.8" stroke-linejoin="round" opacity="1"/><path d="M42.9,411.2 L51.2,432.9" fill="none" stroke="#abcce4" stroke-width="0.8" stroke-linejoin="round" opacity="1"/><path d="M42.9,411.2 L56.8,427.9" fill="none" stroke="#abcce4" stroke-width="0.8" stroke-linejoin="round" opacity="1"/><path d="M42.9,411.2 L49.5,424.5" fill="none" stroke="#abcce4" stroke-width="0.8" stroke-linejoin="round" opacity="1"/><path d="M42.9,411.2 L40.7,424.5" fill="none" stroke="#abcce4" stroke-width="0.8" stroke-linejoin="round" opacity="1"/><path d="M80.7,410.7 L66.8,427.9 L75.7,434.6 L94.6,431.2 Z" fill="none" stroke="#a2c5df" stroke-width="0.8" stroke-linejoin="round" opacity="1"/><path d="M80.7,410.7 L75.7,434.6" fill="none" stroke="#a2c5df" stroke-width="0.8" stroke-linejoin="round" opacity="1"/><path d="M66.8,427.9 L86.0,425.6 L94.6,431.2" fill="none" stroke="#d6e6f1" stroke-width="0.8" stroke-linejoin="round" opacity="1"/><path d="M80.7,410.7 L86.0,425.6" fill="none" stroke="#d6e6f1" stroke-width="0.8" stroke-linejoin="round" opacity="1"/><path d="M131.3,426.3 L126.2,433.3 L118.0,436.0 L109.8,433.3 L104.7,426.3 L104.7,417.7 L109.8,410.7 L118.0,408.0 L126.2,410.7 L131.3,417.7 Z" fill="none" stroke="#a2c5df" stroke-width="0.8" stroke-linejoin="round" opacity="1"/><path d="M118.0,414.5 L125.1,419.7 L122.4,428.1 L113.6,428.1 L110.9,419.7 Z" fill="none" stroke="#a2c5df" stroke-width="0.8" stroke-linejoin="round" opacity="1"/><path d="M118.0,414.5 L118.0,408.0" fill="none" stroke="#a2c5df" stroke-width="0.8" stroke-linejoin="round" opacity="1"/><path d="M125.1,419.7 L131.3,417.7" fill="none" stroke="#a2c5df" stroke-width="0.8" stroke-linejoin="round" opacity="1"/><path d="M122.4,428.1 L126.2,433.3" fill="none" stroke="#a2c5df" stroke-width="0.8" stroke-linejoin="round" opacity="1"/><path d="M113.6,428.1 L109.8,433.3" fill="none" stroke="#a2c5df" stroke-width="0.8" stroke-linejoin="round" opacity="1"/><path d="M110.9,419.7 L104.7,417.7" fill="none" stroke="#a2c5df" stroke-width="0.8" stroke-linejoin="round" opacity="1"/><path d="M118.0,431.0 L109.4,424.8 L112.7,414.7 L123.3,414.7 L126.6,424.8 Z" fill="none" stroke="#d9e9f4" stroke-width="0.8" stroke-linejoin="round" opacity="1"/><path d="M141.5,414.0 L147.5,411.0 L163.5,411.0 L169.5,414.0 L163.5,417.0 L147.5,417.0 Z" fill="none" stroke="#a2c5df" stroke-width="0.8" stroke-linejoin="round" opacity="1"/><path d="M141.5,431.0 L147.5,428.0 L163.5,428.0 L169.5,431.0 L163.5,434.0 L147.5,434.0 Z" fill="none" stroke="#a2c5df" stroke-width="0.8" stroke-linejoin="round" opacity="1"/><path d="M141.5,414.0 L141.5,431.0" fill="none" stroke="#a2c5df" stroke-width="0.8" stroke-linejoin="round" opacity="1"/><path d="M147.5,411.0 L147.5,428.0" fill="none" stroke="#a2c5df" stroke-width="0.8" stroke-linejoin="round" opacity="1"/><path d="M163.5,411.0 L163.5,428.0" fill="none" stroke="#a2c5df" stroke-width="0.8" stroke-linejoin="round" opacity="1"/><path d="M169.5,414.0 L169.5,431.0" fill="none" stroke="#a2c5df" stroke-width="0.8" stroke-linejoin="round" opacity="1"/><path d="M163.5,417.0 L163.5,434.0" fill="none" stroke="#a2c5df" stroke-width="0.8" stroke-linejoin="round" opacity="1"/><path d="M147.5,417.0 L147.5,434.0" fill="none" stroke="#a2c5df" stroke-width="0.8" stroke-linejoin="round" opacity="1"/><path d="M55.6,466.8 L43.0,474.0 L30.4,466.8 L30.4,452.2 L43.0,445.0 L55.6,452.2 Z" fill="none" stroke="#9dc2de" stroke-width="0.8" stroke-linejoin="round" opacity="1"/><path d="M57.0,459.5 L54.3,467.7 L47.3,472.8 L38.7,472.8 L31.7,467.7 L29.0,459.5 L31.7,451.3 L38.7,446.2 L47.3,446.2 L54.3,451.3 Z" fill="none" stroke="#b4d4ea" stroke-width="0.8" stroke-linejoin="round" opacity="1"/><path d="M43.0,460.5 L55.6,466.8" fill="none" stroke="#a2c5df" stroke-width="0.8" stroke-linejoin="round" opacity="1"/><path d="M43.0,460.5 L43.0,474.0" fill="none" stroke="#a2c5df" stroke-width="0.8" stroke-linejoin="round" opacity="1"/><path d="M43.0,460.5 L30.4,466.8" fill="none" stroke="#a2c5df" stroke-width="0.8" stroke-linejoin="round" opacity="1"/><path d="M43.0,460.5 L30.4,452.2" fill="none" stroke="#a2c5df" stroke-width="0.8" stroke-linejoin="round" opacity="1"/><path d="M43.0,460.5 L43.0,445.0" fill="none" stroke="#a2c5df" stroke-width="0.8" stroke-linejoin="round" opacity="1"/><path d="M43.0,460.5 L55.6,452.2" fill="none" stroke="#a2c5df" stroke-width="0.8" stroke-linejoin="round" opacity="1"/><path d="M43.0,474.0 L30.4,452.2 L55.6,452.2 Z" fill="none" stroke="#b4d4ea" stroke-width="0.8" stroke-linejoin="round" opacity="1"/><path d="M69.5,444.5 Q80.5,501.5 91.5,444.5" fill="none" stroke="#abcce4" stroke-width="0.8"/><path d="M110,472.5 C112,461.5 116,461.5 120,458.5 S126,453.5 127,446.5" fill="none" stroke="#b4d4ea" stroke-width="1"/><path d="M150.5,460 H161.0" stroke="#3fd0bf" stroke-width="1.6"/><polygon points="169.5,460 160.0,457.4 160.0,462.6" fill="#3fd0bf"/><polygon points="142.0,460 151.5,457.4 151.5,462.6" fill="#3fd0bf"/><path d="M38.0,497 H48.5" stroke="#d81e4c" stroke-width="1.4"/><polygon points="57,497 47.5,494.6 47.5,499.4" fill="#d81e4c"/><polygon points="29.5,497 39.0,494.6 39.0,499.4" fill="#d81e4c"/><path d="M75.5,497 H86.0" stroke="#3f63e0" stroke-width="1.4"/><polygon points="94.5,497 85.0,494.6 85.0,499.4" fill="#3f63e0"/><polygon points="67.0,497 76.5,494.6 76.5,499.4" fill="#3f63e0"/><path d="M104.5,497 H123.5" stroke="#d82020" stroke-width="1.2"/><polygon points="132,497 122.5,494.4 122.5,499.6" fill="#d82020"/><path d="M142.0,497 H161.0" stroke="#2a9a2c" stroke-width="1.2"/><polygon points="169.5,497 160.0,494.4 160.0,499.6" fill="#2a9a2c"/><path d="M29.5,534.5 H48.5" stroke="#4f63ee" stroke-width="1.2"/><polygon points="57,534.5 47.5,531.9 47.5,537.1" fill="#4f63ee"/><path d="M67.0,534.5 H86.0" stroke="#56d8c0" stroke-width="1.2"/><polygon points="94.5,534.5 85.0,531.9 85.0,537.1" fill="#56d8c0"/><path d="M104.5,534.5 H123.5" stroke="#e21fe2" stroke-width="1.4" stroke-dasharray="2.2 1.4"/><polygon points="132,534.5 122.5,531.9 122.5,537.1" fill="#e21fe2"/><path d="M142.0,534.5 H161.0" stroke="#f0a020" stroke-width="1.2"/><polygon points="169.5,534.5 160.0,531.9 160.0,537.1" fill="#f0a020"/><path d="M29.5,572 H48.5" stroke="#f0a020" stroke-width="1" stroke-dasharray="1.6 1.2"/><polygon points="57,572 47.5,569.4 47.5,574.6" fill="#f0a020"/><path d="M71.0,581 L90.0,563" stroke="#d61b5e" stroke-width="2.6" stroke-linecap="round"/><path d="M108.5,581 L127.5,563" stroke="#f0a020" stroke-width="2.6" stroke-linecap="round"/><rect x="142" y="565.5" width="28" height="13.5" rx="1" fill="none" stroke="#d61b5e" stroke-width="2.2"/><rect x="29.5" y="603" width="28" height="13.5" rx="1" fill="none" stroke="#f0a020" stroke-width="2.2"/><rect x="67" y="603" width="28" height="13.5" rx="1" fill="none" stroke="#25c8f0" stroke-width="2.2"/><path d="M108.5,618.5 L127.5,600.5" stroke="#f4f400" stroke-width="2.6" stroke-linecap="round" stroke-dasharray="3.4 3.4"/><rect x="142" y="603" width="28" height="13.5" rx="1" fill="none" stroke="#4ad8c8" stroke-width="2.2"/><path d="M29,648 Q29,645 33,644.5 L38,642.6 Q43,641.6 48,643.4 L55,645.2 Q57.5,646 57,649 L55,650 H31 Q29,650 29,648 Z" fill="#7fb6c9"/><path d="M35,644.4 L39,643 Q43,642.4 47,644 L48,645 H35 Z" fill="#223"/><circle cx="35" cy="650" r="2.3" fill="#222"/><circle cx="51" cy="650" r="2.3" fill="#222"/><path d="M29,648.6 H57" stroke="#345" stroke-width=".8"/><circle cx="73" cy="650.5" r="6" fill="none" stroke="#222" stroke-width="1.5"/><circle cx="88.5" cy="650.5" r="6" fill="none" stroke="#222" stroke-width="1.5"/><path d="M73,650.5 L78,642 L86,642 L88.500,650.5 M78,642 L81.500,650.5 L86,642" fill="none" stroke="#c33" stroke-width="1"/><path d="M78,641 Q80,635.5 86,636 Q90,636.6 90.500,639.5 L87,642.5 L84,640.5 L82,646 L80,645.5 Z" fill="#26282c"/><circle cx="90.6" cy="637" r="2.2" fill="#3a3d44"/><path d="M81,645 L82.6,650" stroke="#c9a07a" stroke-width="1.6"/><circle cx="121" cy="637.6" r="2.2" fill="#3fa2d8"/><path d="M120,640 L117,645.5 L119.6,650.5 L116.4,655 L114,657.6 M119.6,650.5 L121.600,653.5 L119.4,658.6 M119,641.4 L114.6,645 M120.4,641.6 L123,645.6 L125.6,644.8" fill="none" stroke="#3fa2d8" stroke-width="2" stroke-linecap="round" stroke-linejoin="round"/><path d="M121,639.6 L117.4,646 L120,650.6 L122,647 Z" fill="#3fa2d8"/><circle cx="160" cy="636.8" r="2.2" fill="#3fa2d8"/><path d="M159,639.6 L156,646 L159,650.6 L164.6,653 L166,657.6 M157,648 L152.6,654 L147,657.6 M158,641.4 L153,643.6 L150.6,647.6 M159.600,641.4 L163,645 L166,643.4" fill="none" stroke="#3fa2d8" stroke-width="2" stroke-linecap="round" stroke-linejoin="round"/><path d="M160,639.4 L155.6,646.4 L159,651 L161.600,646 Z" fill="#3fa2d8"/></g></svg>
<div style="position:absolute;left:236px;top:116px;width:1029px;height:543px;background:#333333;"></div>
<div style="position:absolute;left:242px;top:122px;width:1019px;height:537px;background:#b5392f;border-top-left-radius:2px;border-top-right-radius:3px;"></div>
<div style="position:absolute;left:246px;top:127px;width:1009.5px;height:532px;background:#ffffff;"></div>
<svg style="position:absolute;left:0;top:0;" width="1280" height="659" viewBox="0 0 1280 659"><defs><clipPath id="cv"><rect x="236" y="116" width="1029" height="543"/></clipPath></defs><g clip-path="url(#cv)"><path d="M278.72,127 V659 M312.38,127 V659 M346.05,127 V659 M379.71,127 V659 M413.38,127 V659 M447.04,127 V659 M480.71,127 V659 M514.37,127 V659 M548.04,127 V659 M581.70,127 V659 M615.37,127 V659 M649.03,127 V659 M682.69,127 V659 M716.36,127 V659 M750.02,127 V659 M783.69,127 V659 M817.36,127 V659 M851.02,127 V659 M884.68,127 V659 M918.35,127 V659 M952.02,127 V659 M985.68,127 V659 M1019.35,127 V659 M1053.01,127 V659 M1086.67,127 V659 M1120.34,127 V659 M1154.00,127 V659 M1187.67,127 V659 M1221.34,127 V659 M246,159.75 H1255.5 M246,193.45 H1255.5 M246,227.15 H1255.5 M246,260.85 H1255.5 M246,294.55 H1255.5 M246,328.25 H1255.5 M246,361.95 H1255.5 M246,395.65 H1255.5 M246,429.35 H1255.5 M246,463.05 H1255.5 M246,496.75 H1255.5 M246,530.45 H1255.5 M246,564.15 H1255.5 M246,597.85 H1255.5 M246,631.55 H1255.5" stroke="#a4a4a4" stroke-width="1.0" fill="none"/><rect x="358" y="162" width="387" height="410" fill="#ffffff" opacity="0.62"/><path d="M347.3,154.2 H829 V632 H347.3 Z" fill="none" stroke="#74bde9" stroke-width="1.3"/><path d="M588.3,632 V652" stroke="#74bde9" stroke-width="1.3"/><path d="M460,340 L557.6,169.5" stroke="#aecfee" stroke-width="2.4" stroke-linecap="butt" fill="none" stroke-dasharray="7 4.5"/><path d="M460,340 L373.6,381.8" stroke="#aecfee" stroke-width="2.4" stroke-linecap="butt" fill="none" stroke-dasharray="8 4"/><path d="M460,340 L734.6,355" stroke="#aecfee" stroke-width="2.4" stroke-linecap="butt" fill="none" stroke-dasharray="10 3.6"/><path d="M460,340 L551.6,570" stroke="#aecfee" stroke-width="2.4" stroke-linecap="butt" fill="none" stroke-dasharray="7 4.2"/><path d="M557.6,169.5 L373.6,381.8" stroke="#abd0f0" stroke-width="4.8" stroke-linecap="round" fill="none"/><path d="M557.6,169.5 L734.6,355" stroke="#abd0f0" stroke-width="4.8" stroke-linecap="round" fill="none"/><path d="M557.6,169.5 L647.6,397" stroke="#abd0f0" stroke-width="4.8" stroke-linecap="round" fill="none"/><path d="M551.6,570 L373.6,381.8" stroke="#abd0f0" stroke-width="4.8" stroke-linecap="round" fill="none"/><path d="M551.6,570 L734.6,355" stroke="#abd0f0" stroke-width="4.8" stroke-linecap="round" fill="none"/><path d="M551.6,570 L647.6,397" stroke="#abd0f0" stroke-width="4.8" stroke-linecap="round" fill="none"/><path d="M373.6,381.8 L647.6,397" stroke="#abd0f0" stroke-width="4.8" stroke-linecap="round" fill="none"/><path d="M647.6,397 L734.6,355" stroke="#abd0f0" stroke-width="4.8" stroke-linecap="round" fill="none"/><path d="M479,360.4 L595.8,170.2" stroke="#5f99d2" stroke-width="3.0" stroke-linecap="butt" fill="none" stroke-dasharray="8.5 5"/><path d="M479,360.4 L376.6,406.6" stroke="#5f99d2" stroke-width="3.0" stroke-linecap="butt" fill="none" stroke-dasharray="10 4.2"/><path d="M479,360.4 L806.8,378" stroke="#5f99d2" stroke-width="3.0" stroke-linecap="butt" fill="none" stroke-dasharray="13 4.4"/><path d="M479,360.4 L588.2,617" stroke="#5f99d2" stroke-width="3.0" stroke-linecap="butt" fill="none" stroke-dasharray="9 4.6"/><path d="M595.8,170.2 L376.6,406.6" stroke="#5ba1de" stroke-width="5.8" stroke-linecap="round" fill="none"/><path d="M595.8,170.2 L806.8,378" stroke="#5ba1de" stroke-width="5.8" stroke-linecap="round" fill="none"/><path d="M595.8,170.2 L704.2,424.6" stroke="#5ba1de" stroke-width="5.8" stroke-linecap="round" fill="none"/><path d="M588.2,617 L376.6,406.6" stroke="#5ba1de" stroke-width="5.8" stroke-linecap="round" fill="none"/><path d="M588.2,617 L806.8,378" stroke="#5ba1de" stroke-width="5.8" stroke-linecap="round" fill="none"/><path d="M588.2,617 L704.2,424.6" stroke="#5ba1de" stroke-width="5.8" stroke-linecap="round" fill="none"/><path d="M376.6,406.6 L704.2,424.6" stroke="#5ba1de" stroke-width="5.8" stroke-linecap="round" fill="none"/><path d="M704.2,424.6 L806.8,378" stroke="#5ba1de" stroke-width="5.8" stroke-linecap="round" fill="none"/><circle cx="347.3" cy="154.2" r="4.7" fill="#1f9be9"/><circle cx="588.3" cy="154.2" r="4.4" fill="#1f9be9"/><circle cx="347.3" cy="393.2" r="4.4" fill="#1f9be9"/><circle cx="347.3" cy="632" r="4.9" fill="#1f9be9"/><circle cx="588.3" cy="632" r="4.4" fill="#1f9be9"/><clipPath id="rc"><rect x="820" y="140" width="11.6" height="520"/></clipPath><g clip-path="url(#rc)"><circle cx="828.6" cy="154.2" r="4.6" fill="#1f9be9"/><circle cx="829" cy="393.2" r="4.4" fill="#1f9be9"/></g><circle cx="828.2" cy="632.6" r="4.6" fill="#1f9be9"/><circle cx="588.3" cy="653.4" r="4.4" fill="#1f9be9"/><g>
<path d="M824,628.6 L836.4,640" stroke="#fff" stroke-width="3.2"/>
<polygon points="822,626.6 829.4,626.6 822,634" fill="#111" stroke="#111" stroke-width="1"/>
<polygon points="823.6,628 827,628 823.6,631.4" fill="#fff"/>
<polygon points="838.2,641.6 830.8,641.6 838.2,634.2" fill="#fff" stroke="#111" stroke-width="1.2"/>
<path d="M824,628.6 L836.4,640" stroke="#111" stroke-width="1.3"/>
</g></g></svg>
<div style="position:absolute;left:1265px;top:116px;width:15px;height:543px;background:#f0f0f0;"></div>
<div style="position:absolute;left:1266px;top:133px;width:14px;height:19px;background:#c9c9c9;"></div>
<svg style="position:absolute;left:1268px;top:122px;" width="10" height="7" viewBox="0 0 10 7"><path d="M1.2,5.6 L5,1.8 L8.8,5.6" fill="none" stroke="#444" stroke-width="1.8"/></svg>
<svg style="position:absolute;left:1268px;top:647px;" width="10" height="7" viewBox="0 0 10 7"><path d="M1.2,1.4 L5,5.2 L8.8,1.4" fill="none" stroke="#444" stroke-width="1.8"/></svg>
<div style="position:absolute;left:0px;top:659px;width:1280px;height:24px;background:#f1f1f1;"></div>
<div style="position:absolute;left:6.4px;top:664.5px;font-size:11.5px;line-height:13.5px;color:#444;font-weight:normal;white-space:nowrap;letter-spacing:0.379px;">Modified</div>
<svg style="position:absolute;left:525px;top:663px;" width="16" height="16" viewBox="0 0 16 16">
<path d="M3.6,0.8 H10.6 L14.6,4.8 V12.6 H3.6 Z" fill="#b9b9b9"/>
<path d="M10.6,0.8 V4.8 H14.6" fill="none" stroke="#d9d9d9" stroke-width="1"/>
<path d="M11.6,11.4 H2 M5.2,8 L1.6,11.4 L5.2,14.8" fill="none" stroke="#9d9d9d" stroke-width="2"/>
</svg>
<svg style="position:absolute;left:547px;top:663px;" width="16" height="16" viewBox="0 0 16 16">
<path d="M1,0.8 H8 L12,4.8 V12.6 H1 Z" fill="#b9b9b9"/>
<path d="M8,0.8 V4.8 H12" fill="none" stroke="#d9d9d9" stroke-width="1"/>
<path d="M4.4,11.4 H14 M10.8,8 L14.400,11.4 L10.8,14.8" fill="none" stroke="#9d9d9d" stroke-width="2"/>
</svg>
<div style="position:absolute;left:568px;top:662px;width:1px;height:19px;background:#cfcfcf;"></div>
<svg style="position:absolute;left:575px;top:664px;" width="15" height="15" viewBox="0 0 15 15"><rect width="14.6" height="14.6" rx="1" fill="#b9b9b9"/><path d="M4,3.4 V11.2" stroke="#fff" stroke-width="1.8"/><polygon points="11,3.2 11,11.4 5.2,7.3" fill="#fff"/></svg>
<svg style="position:absolute;left:596px;top:664px;" width="15" height="15" viewBox="0 0 15 15"><rect width="14.6" height="14.6" rx="1" fill="#b9b9b9"/><polygon points="10.4,3.2 10.4,11.4 4,7.3" fill="#fff"/></svg>
<div style="position:absolute;left:615px;top:661px;width:39px;height:19px;background:#fff;border:1px solid #c6c6c6;"></div>
<div style="position:absolute;left:618.2px;top:664.5px;font-size:11.5px;line-height:13.5px;color:#444;font-weight:normal;white-space:nowrap;letter-spacing:-0.167px;">1 of 10</div>
<svg style="position:absolute;left:658px;top:664px;" width="15" height="15" viewBox="0 0 15 15"><rect width="14.6" height="14.6" rx="1" fill="#3b78b8"/><polygon points="4.4,3.2 4.4,11.4 10.8,7.3" fill="#fff"/></svg>
<svg style="position:absolute;left:680px;top:664px;" width="15" height="15" viewBox="0 0 15 15"><rect width="14.6" height="14.6" rx="1" fill="#3b78b8"/><path d="M10.6,3.4 V11.2" stroke="#fff" stroke-width="1.8"/><polygon points="3.6,3.2 3.600,11.4 9.4,7.3" fill="#fff"/></svg>
<div style="position:absolute;left:701px;top:662px;width:1px;height:19px;background:#cfcfcf;"></div>
<svg style="position:absolute;left:708px;top:664px;" width="15" height="15" viewBox="0 0 15 15"><circle cx="7.3" cy="7.3" r="6.4" fill="none" stroke="#b4b4b4" stroke-width="1.3"/><path d="M11,7.3 H3.8 M6.600,4.4 L3.6,7.3 L6.600,10.2" fill="none" stroke="#b4b4b4" stroke-width="1.4"/></svg>
<svg style="position:absolute;left:729px;top:664px;" width="15" height="15" viewBox="0 0 15 15"><circle cx="7.3" cy="7.3" r="6.4" fill="none" stroke="#b4b4b4" stroke-width="1.3"/><path d="M3.6,7.3 H10.8 M8,4.4 L11,7.3 L8,10.2" fill="none" stroke="#b4b4b4" stroke-width="1.4"/></svg>
<div style="position:absolute;left:1215px;top:661px;width:22px;height:21px;background:#b9d7f0;"></div>
<svg style="position:absolute;left:1196px;top:664px;" width="15" height="15" viewBox="0 0 15 15"><rect x="0.5" y="0.5" width="14" height="14" fill="#f4f8fc" stroke="#5d88b5" stroke-width="1"/><rect x="3.6" y="2.4" width="7.8" height="10.2" fill="#fff" stroke="#8a8a8a" stroke-width=".9"/><path d="M5,5 H10 M5,7 H10 M5,9 H10 M5,11 H10" stroke="#b9b9b9" stroke-width=".8"/></svg>
<svg style="position:absolute;left:1219px;top:664px;" width="15" height="15" viewBox="0 0 15 15"><rect x="0.5" y="0.5" width="14" height="14" fill="#f4f8fc" stroke="#5d88b5" stroke-width="1"/><rect x="3.6" y="0.6" width="7.8" height="5" fill="#fff" stroke="#8a8a8a" stroke-width=".9"/><rect x="3.6" y="7.6" width="7.800" height="6.8" fill="#fff" stroke="#8a8a8a" stroke-width=".9"/><path d="M5,9.6 H10 M5,11.6 H10" stroke="#b9b9b9" stroke-width=".8"/></svg>
<svg style="position:absolute;left:1240px;top:664px;" width="15" height="15" viewBox="0 0 15 15"><rect x="0.5" y="0.5" width="14" height="14" fill="#f4f8fc" stroke="#5d88b5" stroke-width="1"/><rect x="2.2" y="1.6" width="4.600" height="5" fill="#fff" stroke="#8a8a8a" stroke-width=".9"/><rect x="8.2" y="1.6" width="4.600" height="5" fill="#fff" stroke="#8a8a8a" stroke-width=".9"/><rect x="2.2" y="8.4" width="4.600" height="5" fill="#fff" stroke="#8a8a8a" stroke-width=".9"/><rect x="8.2" y="8.400" width="4.600" height="5" fill="#fff" stroke="#8a8a8a" stroke-width=".9"/></svg>
<svg style="position:absolute;left:1261px;top:664px;" width="15" height="15" viewBox="0 0 15 15"><rect x="0.5" y="0.5" width="14" height="14" fill="#f4f8fc" stroke="#5d88b5" stroke-width="1"/><rect x="2.2" y="2.4" width="4.800" height="10.2" fill="#fff" stroke="#8a8a8a" stroke-width=".9"/><rect x="8" y="2.4" width="4.800" height="10.2" fill="#fff" stroke="#8a8a8a" stroke-width=".9"/><path d="M3.2,5 H6 M3.2,7 H6 M3.2,9 H6 M9,5 H11.8 M9,7 H11.8 M9,9 H11.8" stroke="#b9b9b9" stroke-width=".8"/></svg>
<div style="position:absolute;left:0px;top:682.6px;width:1280px;height:37.4px;background:#eef0f3;"></div>
<svg style="position:absolute;left:15px;top:693px;" width="16" height="16" viewBox="0 0 16 16"><path d="M0,2.2 L6.8,1.2 V7.4 H0 Z M7.8,1.1 L15.6,0 V7.4 H7.800 Z M0,8.4 H6.8 V14.6 L0,13.6 Z M7.8,8.4 H15.6 V15.8 L7.800,14.7 Z" fill="#111"/></svg>
<div style="position:absolute;left:46px;top:682.6px;width:320px;height:37.4px;background:#ffffff;border-left:1px solid #dcdcdc;border-top:1px solid #e2e2e2;box-sizing:border-box;"></div>
<svg style="position:absolute;left:56px;top:693px;" width="16" height="16" viewBox="0 0 16 16"><circle cx="9.4" cy="6" r="4.900" fill="none" stroke="#222" stroke-width="1.3"/><path d="M6,9.6 L0.8,14.8" stroke="#222" stroke-width="1.4"/></svg>
<div style="position:absolute;left:82.2px;top:693.5px;font-size:14.5px;line-height:16.5px;color:#3f3f3f;font-weight:normal;white-space:nowrap;letter-spacing:-0.377px;">Escribe aquí para buscar.</div>
<svg style="position:absolute;left:381px;top:689px;" width="24" height="24" viewBox="0 0 24 24">
<defs><linearGradient id="ng" x1="0" y1="0" x2="1" y2="0"><stop offset="0" stop-color="#2f55cf"/><stop offset=".6" stop-color="#6f9be6"/><stop offset="1" stop-color="#c5dbf6"/></linearGradient></defs>
<ellipse cx="12" cy="21.400" rx="6.400" ry="1.800" fill="#d9dcdf"/>
<path d="M9.600,16.600 H14.400 L15.600,21 H8.400 Z" fill="#e3e6e9"/>
<path d="M3.600,3.600 L20.600,2 Q21.600,2 21.600,3 L21,16 Q21,17 20,17.200 L5.600,18.200 Q4.400,18.200 4.300,17 Z" fill="url(#ng)"/>
<path d="M5,1.800 L13,1.200 L12.600,5.400 L5,6 Z" fill="#1a2fa8"/>
<path d="M1.400,7.600 L15.600,6.800 L15.400,11.600 L1.600,12.400 Z" fill="#b9d6f7" stroke="#4f78d8" stroke-width=".8"/>
<path d="M3,9.800 H14" stroke="#3c63cd" stroke-width="1.400" stroke-dasharray="1.600 1"/>
</svg>
<svg style="position:absolute;left:426px;top:689px;" width="24" height="24" viewBox="0 0 24 24">
<circle cx="12.200" cy="12" r="10.400" fill="none" stroke="#e2345e" stroke-width="1.700"/>
<ellipse cx="12.200" cy="12" rx="5.600" ry="8.600" fill="none" stroke="#e2345e" stroke-width="1.700"/>
<path d="M8.600,3.600 Q3.400,6.600 3.400,12 Q3.400,17.400 8.600,20.400" fill="none" stroke="#ec6f8d" stroke-width="1.300"/>
</svg>
<svg style="position:absolute;left:472px;top:690px;" width="26" height="23" viewBox="0 0 26 23">
<ellipse cx="14" cy="20.600" rx="6" ry="1.700" fill="#cfd2d5"/>
<path d="M11.600,16 H16.400 L17.400,20.400 H10.600 Z" fill="#d9dcdf"/>
<path d="M3,4 L6,2.600 V16 L3,14.600 Z" fill="#a9adb2"/>
<rect x="5.400" y="1.600" width="18.600" height="15" rx="1.200" fill="#c4c8cc"/>
<rect x="7.400" y="3.400" width="14.600" height="11" fill="#eaf4fb"/>
<path d="M8,11.400 L10.400,10.600 L12,5.600 L13.600,11.600 L15.400,8.400 L17,11.400 L18.600,7 L20,11 L21.600,10.400" fill="none" stroke="#3d86c6" stroke-width="1"/>
</svg>
<svg style="position:absolute;left:518px;top:689px;" width="25" height="25" viewBox="0 0 25 25">
<defs><linearGradient id="eg" x1="0" y1="1" x2="1" y2="0"><stop offset="0" stop-color="#1469c4"/><stop offset=".55" stop-color="#2098d8"/><stop offset=".8" stop-color="#45cf86"/><stop offset="1" stop-color="#6fe070"/></linearGradient></defs>
<circle cx="12.400" cy="12.200" r="11.600" fill="url(#eg)"/>
<path d="M23.600,10.600 Q22.600,4 15.600,3.400 Q9,3.400 6.400,9 Q10,5.800 14.400,7.600 Q17.600,9.400 16.600,12.800 L14.600,14.600 Q18.600,16.600 23.600,12.600 Z" fill="#3fd08a" opacity=".55"/>
<path d="M8.600,13.200 Q8.400,9.800 11.600,8.800 Q15.400,8.400 16.200,11.600 Q16.200,13.600 14.600,14.400 Q18.200,16.600 22,13.600 Q20.600,19.200 15.600,19.600 Q9.600,19.200 8.600,13.200 Z" fill="#f3f6f8"/>
<path d="M8.600,13.200 Q9.400,18.800 15.400,19.600 Q12.400,23 7.400,20.600 Q3.400,17.600 4.600,12.600 Q6,9 9.600,8.400 Q8,10.400 8.600,13.200 Z" fill="#135fb6" opacity=".75"/>
</svg>
<svg style="position:absolute;left:566px;top:690px;" width="22" height="22" viewBox="0 0 22 22">
<circle cx="10.600" cy="10.600" r="9.800" fill="#262626"/>
<path d="M10.600,10.600 Q7.600,7.600 9.600,3.400 M10.600,10.600 Q14.800,9.600 17.400,13.400 M10.600,10.600 Q9.600,14.800 5,15.200" fill="none" stroke="#d0d0d0" stroke-width="1.500"/>
<circle cx="10.600" cy="10.600" r="7.400" fill="none" stroke="#3d3d3d" stroke-width="1"/>
</svg>
<svg style="position:absolute;left:611px;top:692px;" width="22" height="20" viewBox="0 0 22 20">
<path d="M1,1.600 H8.600 L10,3.400 H1 Z" fill="#e3a12f"/>
<rect x="1" y="2.800" width="20" height="15.200" rx=".8" fill="#f9d66c"/>
<path d="M1,8 H21 V18 H1 Z" fill="#f6cf5e"/>
<path d="M4.400,18 V11.400 H17.400 V18 H13.600 V14.600 H8.200 V18 Z" fill="#3a93da"/>
</svg>
<div style="position:absolute;left:646px;top:683px;width:45px;height:37px;background:#f8f9fb;"></div>
<svg style="position:absolute;left:657px;top:690px;" width="24" height="23" viewBox="0 0 24 23">
<rect x="0.2" y="0" width="22.8" height="22.3" rx="2.600" fill="#cc2e2a"/>
<polygon points="1.6,0.6 5.800,0.400 7.200,6.600 4,9.200" fill="#fff" opacity=".92"/>
<path d="M5,1 L12.600,16.600" stroke="#f6c4be" stroke-width="1.300" fill="none"/>
<path d="M9.600,0.600 L14.600,9 L12.800,16.800" stroke="#f2aaa3" stroke-width="1.200" fill="none"/>
<path d="M8,5.600 L12.200,14" stroke="#e98880" stroke-width="1" fill="none"/>
<path d="M12.600,18.500 H23" stroke="#fbe3e0" stroke-width="1.300"/>
</svg>
<div style="position:absolute;left:420px;top:717.8px;width:37.5px;height:2.2px;background:#1b7dd3;"></div>
<div style="position:absolute;left:465.6px;top:717.8px;width:38.0px;height:2.2px;background:#1b7dd3;"></div>
<div style="position:absolute;left:512px;top:717.8px;width:37.60000000000002px;height:2.2px;background:#1b7dd3;"></div>
<div style="position:absolute;left:558px;top:717.8px;width:37.60000000000002px;height:2.2px;background:#1b7dd3;"></div>
<div style="position:absolute;left:604px;top:717.8px;width:37.60000000000002px;height:2.2px;background:#1b7dd3;"></div>
<div style="position:absolute;left:646px;top:717.8px;width:45px;height:2.2px;background:#1b7dd3;"></div>
<svg style="position:absolute;left:1027px;top:699px;" width="14" height="8" viewBox="0 0 14 8"><path d="M1,6.800 L7,1 L13,6.800" fill="none" stroke="#222" stroke-width="1.400"/></svg>
<svg style="position:absolute;left:1050px;top:693px;" width="12" height="17" viewBox="0 0 12 17"><rect x="3.200" y="0.400" width="5.200" height="9.800" rx="2.600" fill="#111"/><path d="M1,7.600 Q1,12.400 5.800,12.400 Q10.600,12.400 10.600,7.600 M5.800,12.400 V15.600 M3,15.800 H8.600" fill="none" stroke="#111" stroke-width="1.200"/></svg>
<svg style="position:absolute;left:1071px;top:694px;" width="18" height="15" viewBox="0 0 18 15"><path d="M0.600,5 H3.600 L7.400,1.400 V13.400 L3.600,9.800 H0.600 Z" fill="none" stroke="#111" stroke-width="1.100"/><path d="M9.600,5 Q11,7.400 9.600,9.800 M11.800,3.400 Q14,7.400 11.800,11.400 M14,1.800 Q17,7.400 14,13" fill="none" stroke="#111" stroke-width="1.100"/></svg>
<svg style="position:absolute;left:1096px;top:695px;" width="14" height="14" viewBox="0 0 14 14"><path d="M1.600,13 Q1.600,2 12.600,1.600 M4.600,13 Q4.600,5 12.600,4.600 M7.600,13 Q7.600,8 12.600,7.600" fill="none" stroke="#555" stroke-width="1.200"/><circle cx="11.600" cy="11.800" r="1.500" fill="#111"/></svg>
<svg style="position:absolute;left:1115px;top:695px;" width="18" height="12" viewBox="0 0 18 12"><rect x="3.600" y="2.600" width="13" height="7.800" rx="1" fill="none" stroke="#111" stroke-width="1.200"/><rect x="5.400" y="4.400" width="9.400" height="4.200" fill="#111"/><path d="M1.600,0.600 V5 M0.400,1.600 H3" stroke="#111" stroke-width="1.200"/><rect x="0.600" y="3.400" width="3" height="2.600" fill="#111"/></svg>
<svg style="position:absolute;left:1142px;top:692px;" width="18" height="18" viewBox="0 0 18 18"><path d="M7.600,14.600 L13.600,3.400 Q14.600,1.600 16,2.600 Q16.800,3.400 15.800,5 L9.600,15.600 L6.800,16.800 Z" fill="none" stroke="#111" stroke-width="1.100"/><path d="M9.600,8.600 Q4,8.400 2.400,11.600 Q1.600,14.600 4.600,15.400 Q6.600,15.600 7.600,14.400 M12.600,10.400 Q15.600,9.600 17.200,11" fill="none" stroke="#111" stroke-width="1.100"/></svg>
<div style="position:absolute;left:1185px;top:686.5px;font-size:11.5px;line-height:13.5px;color:#222;font-weight:normal;white-space:nowrap;letter-spacing:-0.516px;">13:26</div>
<div style="position:absolute;left:1171.6px;top:703px;font-size:11.5px;line-height:13.5px;color:#222;font-weight:normal;white-space:nowrap;letter-spacing:-0.270px;">11/05/2021</div>
<svg style="position:absolute;left:1242px;top:693px;" width="17" height="17" viewBox="0 0 17 17"><path d="M0.600,0.600 H14.400 V11 H8 L4.400,14.400 V11 H0.600 Z" fill="#111"/><path d="M3,3.600 H12 M3,5.800 H12 M3,8 H9" stroke="#eef0f3" stroke-width="1"/><circle cx="12.600" cy="11.800" r="3" fill="#111" stroke="#eef0f3" stroke-width=".9"/><path d="M11.200,12.800 L14,10.600" stroke="#eef0f3" stroke-width=".9"/></svg>
</body></html>
